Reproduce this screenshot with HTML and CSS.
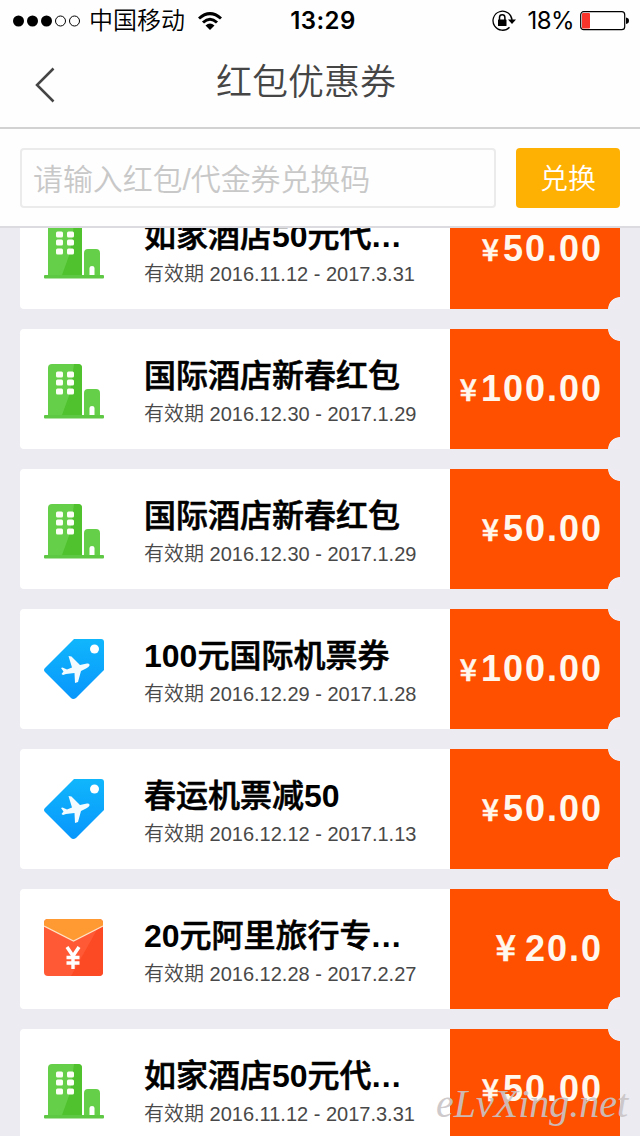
FILE: index.html
```html
<!DOCTYPE html>
<html lang="zh-CN">
<head>
<meta charset="utf-8">
<title>红包优惠券</title>
<link rel="stylesheet" href="styles.css">
</head>
<body>
<svg class="symbols" aria-hidden="true">
  <defs>
    <linearGradient id="tag-fill" x1="0" y1="0" x2="0" y2="1">
      <stop offset="0" stop-color="#10b6fc"/><stop offset="1" stop-color="#0896fc"/>
    </linearGradient>
  </defs>
  <symbol id="hotel" viewBox="0 0 60 60">
    <path fill="#66cf4a" d="M4 53V6Q4 2 8 2H34Q38 2 38 6V53Z"/>
    <path fill="#4fc22d" d="M38 5V53H18L26 31L30 2H34Q38 2 38 6Z"/>
    <path fill="#66cf4a" d="M40 53V31Q40 27 44 27H52Q56 27 56 31V53H50.500V46Q50.500 44 48 44Q45.500 44 45.500 46V53Z"/>
    <path fill="#5ec744" d="M1 53H59Q60 53 60 54V55.500Q60 56.500 59 56.500H1Q0 56.500 0 55.500V54Q0 53 1 53Z"/>
    <g fill="#fbfff5">
      <rect x="12" y="9.500" width="7" height="6" rx="1.5"/><rect x="23" y="9.500" width="7" height="6" rx="1.5"/>
      <rect x="12" y="17.500" width="7" height="6" rx="1.5"/><rect x="23" y="17.500" width="7" height="6" rx="1.5"/>
      <rect x="12" y="26.500" width="7" height="6" rx="1.5"/><rect x="23" y="26.500" width="7" height="6" rx="1.5"/>
    </g>
  </symbol>
  <symbol id="flight" viewBox="0 0 60 60">
    <path fill="url(#tag-fill)" d="M30 0H57Q60 0 60 3V31L32 59Q29 61 27 59L1 33Q-1 31 1 29Z"/>
    <circle cx="50.500" cy="10" r="4.500" fill="#fff"/>
    <path fill="#f4fbff" d="M24.500 17L27.500 17.500L36 26L43 24.500Q46 24 45.500 26.500Q45 28 42 29.500L37 32L34 43L31 44L30.500 34L22 35L19 36L17.500 35L19.500 32.500L17 29L18.500 28.500L23 30.500L28 28.500Z"/>
  </symbol>
  <symbol id="packet" viewBox="0 0 60 60">
    <rect width="59" height="57" rx="4" fill="#ff5a35"/>
    <path fill="#fc4a25" d="M55 7L59 7V53Q59 57 55 57H27Z"/>
    <path fill="#ff9a32" d="M0 7V4Q0 0 4 0H55Q59 0 59 4V7L29.500 22Z"/>
    <path fill="none" stroke="#ffe3c8" stroke-width="1.300" d="M0 7L29.500 22L59 7"/>
    <path fill="none" stroke="#fff" stroke-width="3.400" d="M23 28L29 37L35 28M29 37V50M22.500 38.500H35.500M22.500 44H35.500"/>
  </symbol>
</svg>
<div class="screen">
  <header class="header">
    <div class="status">
      <div class="status-left">
        <svg class="signal" viewBox="0 0 68 12"><g><circle cx="5.500" cy="6" r="5.500"/><circle cx="19.500" cy="6" r="5.500"/><circle cx="33.500" cy="6" r="5.500"/></g><g fill="none" stroke="#000"><circle cx="47.500" cy="6" r="5"/><circle cx="61.500" cy="6" r="5"/></g></svg>
        <span class="carrier">中国移动</span>
        <svg class="wifi" viewBox="0 0 24 18"><g fill="none" stroke="#000" stroke-width="3"><path d="M1 6.500Q12-3.300 23 6.500"/><path d="M5 10.500Q12 4 19 10.500"/></g><path d="M7.500 13.500Q12 9.500 16.500 13.500L12 18Z"/></svg>
      </div>
      <span class="clock">13:29</span>
      <div class="status-right">
        <svg class="lock" viewBox="0 0 24 22"><g fill="none" stroke="#000" stroke-width="1.300"><path d="M17.500 17.200A9.500 9.500 0 1 1 20 10"/><path d="M7.500 10V7.500A2.700 2.700 0 0 1 12.900 7.500V10" stroke-width="1.500"/></g><rect x="6" y="9.500" width="8.500" height="6.500" rx=".6"/><path d="M16 9.500H24L20 14Z"/></svg>
        <span class="percent">18%</span>
        <svg class="battery" viewBox="0 0 49 20"><rect x=".7" y=".7" width="44" height="18" rx="3" fill="#fff" stroke="#000" stroke-width="1.200"/><rect x="2" y="2" width="8" height="15.500" rx="1" fill="#f8342b"/><path d="M46 6.500Q49 7 49 9.800Q49 12.500 46 13Z"/></svg>
      </div>
    </div>
    <div class="nav">
      <svg class="back" viewBox="0 0 20 36"><path d="M18.500 1.500L2 18L18.500 34.500" fill="none" stroke="#454545" stroke-width="2.500"/></svg>
      <h1 class="page-title">红包优惠券</h1>
    </div>
  </header>
  <div class="redeem">
    <div class="code-input">请输入红包/代金券兑换码</div>
    <div class="redeem-button">兑换</div>
  </div>
  <main class="list">
    <article class="coupon"><svg class="coupon-icon"><use href="#hotel"/></svg><div class="info"><h2 class="name">如家酒店<b>50</b>元代<b class="more">...</b></h2><p class="dates">有效期 2016.11.12 - 2017.3.31</p></div><div class="price"><span class="yen">¥</span>50.00</div></article>
    <article class="coupon"><svg class="coupon-icon"><use href="#hotel"/></svg><div class="info"><h2 class="name">国际酒店新春红包</h2><p class="dates">有效期 2016.12.30 - 2017.1.29</p></div><div class="price"><span class="yen">¥</span>100.00</div></article>
    <article class="coupon"><svg class="coupon-icon"><use href="#hotel"/></svg><div class="info"><h2 class="name">国际酒店新春红包</h2><p class="dates">有效期 2016.12.30 - 2017.1.29</p></div><div class="price"><span class="yen">¥</span>50.00</div></article>
    <article class="coupon"><svg class="coupon-icon"><use href="#flight"/></svg><div class="info"><h2 class="name"><b>100</b>元国际机票券</h2><p class="dates">有效期 2016.12.29 - 2017.1.28</p></div><div class="price"><span class="yen">¥</span>100.00</div></article>
    <article class="coupon"><svg class="coupon-icon"><use href="#flight"/></svg><div class="info"><h2 class="name">春运机票减<b>50</b></h2><p class="dates">有效期 2016.12.12 - 2017.1.13</p></div><div class="price"><span class="yen">¥</span>50.00</div></article>
    <article class="coupon"><svg class="coupon-icon"><use href="#packet"/></svg><div class="info"><h2 class="name"><b>20</b>元阿里旅行专<b class="more">...</b></h2><p class="dates">有效期 2016.12.28 - 2017.2.27</p></div><div class="price"><span class="yen yen-large">¥</span>20.0</div></article>
    <article class="coupon"><svg class="coupon-icon"><use href="#hotel"/></svg><div class="info"><h2 class="name">如家酒店<b>50</b>元代<b class="more">...</b></h2><p class="dates">有效期 2016.11.12 - 2017.3.31</p></div><div class="price"><span class="yen">¥</span>50.00</div></article>
  </main>
  <div class="watermark">eLvXing.net</div>
</div>
</body>
</html>
```
FILE: styles.css
```css
* { box-sizing: border-box; }
body { margin: 0; font-family: "Liberation Sans", "Noto Sans CJK SC", sans-serif; }
h1, h2, p { margin: 0; }
svg { display: block; flex: none; }
.symbols { position: absolute; width: 0; height: 0; }
.screen { position: relative; display: flex; flex-direction: column; width: 640px; height: 1136px; overflow: hidden; background: #ebebf1; }

.header { flex: none; height: 129px; background: #fefefe; border-bottom: 2px solid #d2d2d2; }
.status { display: grid; grid-template-columns: 1fr auto 1fr; align-items: center; height: 41px; padding: 0 11px 0 13px; font-family: Inter, "Noto Sans CJK SC", sans-serif; line-height: 40px; }
.status-left, .status-right { display: flex; align-items: center; }
.status-right { justify-content: flex-end; }
.signal { width: 68px; height: 12px; }
.carrier { margin-left: 8px; padding-top: 1px; font-size: 24px; font-weight: 350; }
.wifi { width: 24px; height: 18px; margin-left: 13px; }
.clock { padding: 1px 0 0 4px; font-size: 24px; font-weight: 600; letter-spacing: .4px; }
.lock { width: 24px; height: 22px; margin-right: 12px; }
.percent { padding-top: 1px; font-size: 24px; letter-spacing: -.6px; }
.battery { width: 49px; height: 20px; margin-left: 6px; }
.nav { display: grid; grid-template-columns: 1fr auto 1fr; align-items: center; height: 86px; padding: 0 35px; }
.back { width: 20px; height: 36px; margin-top: 2px; }
.page-title { margin-right: 28px; padding-bottom: 2px; font-size: 36px; font-weight: 350; color: #454545; line-height: 80px; }

.redeem { flex: none; display: flex; gap: 20px; height: 99px; padding: 19px 20px; background: #fefefe; border-bottom: 2px solid #dcdce0; }
.code-input { flex: 1; height: 60px; padding-left: 11px; border: 2px solid #ebebeb; border-radius: 4px; font-size: 30px; font-weight: 350; letter-spacing: -.1px; line-height: 60px; color: #c8c8c8; white-space: nowrap; }
.redeem-button { width: 104px; height: 60px; border-radius: 4px; background: #ffb103; color: #fff; font-size: 28px; font-weight: 350; line-height: 63px; text-align: center; }

.list { flex: 1; display: flex; flex-direction: column; justify-content: flex-start; gap: 20px; min-height: 0; padding: 0 20px; overflow: hidden; }
.coupon { flex: none; display: flex; height: 120px; padding-left: 24px; border-radius: 4px 0 0 4px; background: #fff; }
.coupon:first-child { margin-top: -39px; }
.coupon-icon { width: 60px; height: 60px; margin-top: 33px; }
.coupon-icon:has([href="#flight"]), .coupon-icon:has([href="#packet"]) { margin-top: 30px; }
.info { width: 306px; margin-left: 40px; }
.name { margin-top: 24px; font-size: 32px; line-height: 46px; font-weight: 500; color: #000; white-space: nowrap; -webkit-text-stroke: .6px #000; }
.name b { font-weight: 700; -webkit-text-stroke: 0; }
.name .more { letter-spacing: 1.200px; }
.dates { font-size: 20px; font-weight: 350; line-height: 28px; color: #484848; margin-top: 1px; white-space: nowrap; }
.price { width: 170px; padding-right: 17px; text-align: right; white-space: nowrap; color: #fff8ef; font-size: 36px; font-weight: 700; line-height: 120px; letter-spacing: 2px;
  background: radial-gradient(circle at 100% 0, #eeecf2 11.500px, transparent 12.200px), radial-gradient(circle at 100% 100%, #eeecf2 11.500px, transparent 12.200px), #ff5000; }
.yen { margin-right: 2px; font-family: "Noto Sans CJK SC", sans-serif; font-size: 30px; font-weight: 500; line-height: 1; -webkit-text-stroke: .6px #fff8ef; }
.yen-large { margin-right: 7px; font-size: 36px; }
.watermark { position: absolute; left: 436px; top: 1080px; font: italic 40px/48px "Liberation Serif", serif; letter-spacing: 0; color: #c9c4c6; opacity: .9; }
```
